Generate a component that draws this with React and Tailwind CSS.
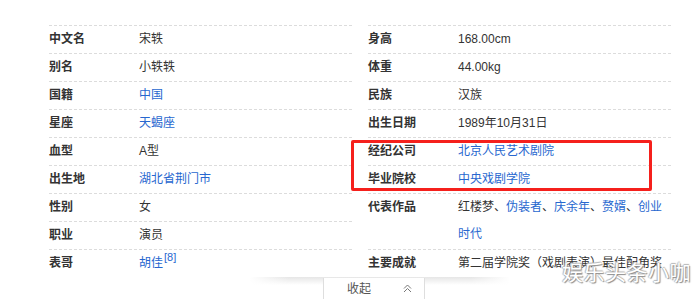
import React from "react";

const Line = () => (
  <div className="h-px w-full bg-[repeating-linear-gradient(to_right,#dcdcdc_0,#dcdcdc_3px,transparent_3px,transparent_5px)]" />
);

const Row = ({ label, children, extra = "" }) => (
  <div className="flex flex-col">
    <Line />
    <div className={"flex leading-[27px] " + extra}>
      <div className="w-[90px] shrink-0 font-bold text-[#333]">{label}</div>
      <div className="min-w-0 flex-1 text-[#333]">{children}</div>
    </div>
  </div>
);

const A = ({ children }) => <span className="text-[#2767cf]">{children}</span>;

export default function App() {
  return (
    <div className="relative h-[299px] w-[699px] overflow-hidden bg-white font-['Liberation_Sans','Noto_Sans_CJK_SC',sans-serif] text-[12px]">
      <div className="flex gap-[15px] pl-[49px] pt-[25px]">
        <div className="flex w-[304px] flex-col">
          <Row label="中文名">宋轶</Row>
          <Row label="别名">小轶轶</Row>
          <Row label="国籍"><A>中国</A></Row>
          <Row label="星座"><A>天蝎座</A></Row>
          <Row label="血型">A型</Row>
          <Row label="出生地"><A>湖北省荆门市</A></Row>
          <Row label="性别">女</Row>
          <Row label="职业">演员</Row>
          <Row label="表哥">
            <A>胡佳</A>
            <span className="relative -top-[6px] ml-[1px] inline-block align-baseline text-[11px] leading-none text-[#2767cf]">[8]</span>
          </Row>
        </div>
        <div className="flex w-[305px] flex-col">
          <Row label="身高">168.00cm</Row>
          <Row label="体重">44.00kg</Row>
          <Row label="民族">汉族</Row>
          <Row label="出生日期">1989年10月31日</Row>
          <Row label="经纪公司"><A>北京人民艺术剧院</A></Row>
          <Row label="毕业院校"><A>中央戏剧学院</A></Row>
          <Row label="代表作品" extra="pb-[1px]">
            红楼梦、<A>伪装者</A>、<A>庆余年</A>、<A>赘婿</A>、<A>创业时代</A>
          </Row>
          <Row label="主要成就">
            <div className="h-[27px] overflow-hidden">第二届学院奖（戏剧表演）最佳配角奖</div>
          </Row>
        </div>
      </div>

      {/* red highlight box */}
      <div className="absolute left-[351px] top-[140px] h-[51px] w-[301px] rounded-[2px] border-[3px] border-[#f5201c]" />

      {/* watermark */}
      <div className="absolute left-[562px] top-[260px] text-[21px] leading-[26px] tracking-[0.5px] text-white [text-shadow:1px_1px_1px_#8a8a8a,-1px_0_1px_#b5b5b5,0_-1px_1px_#b5b5b5]">
        娱乐头条小咖
      </div>

      {/* collapse bar */}
      <div className="absolute left-[250px] top-[277px] h-[22px] w-[260px] bg-[linear-gradient(to_right,rgba(255,255,255,1),rgba(255,255,255,0)_15%,rgba(255,255,255,0)_85%,rgba(255,255,255,1)),linear-gradient(to_bottom,#e6e6e6,#ffffff_8px)]" />
      <div className="absolute left-[323px] top-[278px] flex h-[21px] w-[102px] items-center border-x border-[#dedede] bg-white pl-[23px] pr-[12px]">
        <span className="text-[12px] text-[#555]">收起</span>
        <svg className="ml-auto" width="9" height="9" viewBox="0 0 9 9" fill="none" stroke="#777" strokeWidth="1">
          <path d="M1 4.5 L4.5 1 L8 4.5" />
          <path d="M1 8 L4.5 4.5 L8 8" />
        </svg>
      </div>
    </div>
  );
}
